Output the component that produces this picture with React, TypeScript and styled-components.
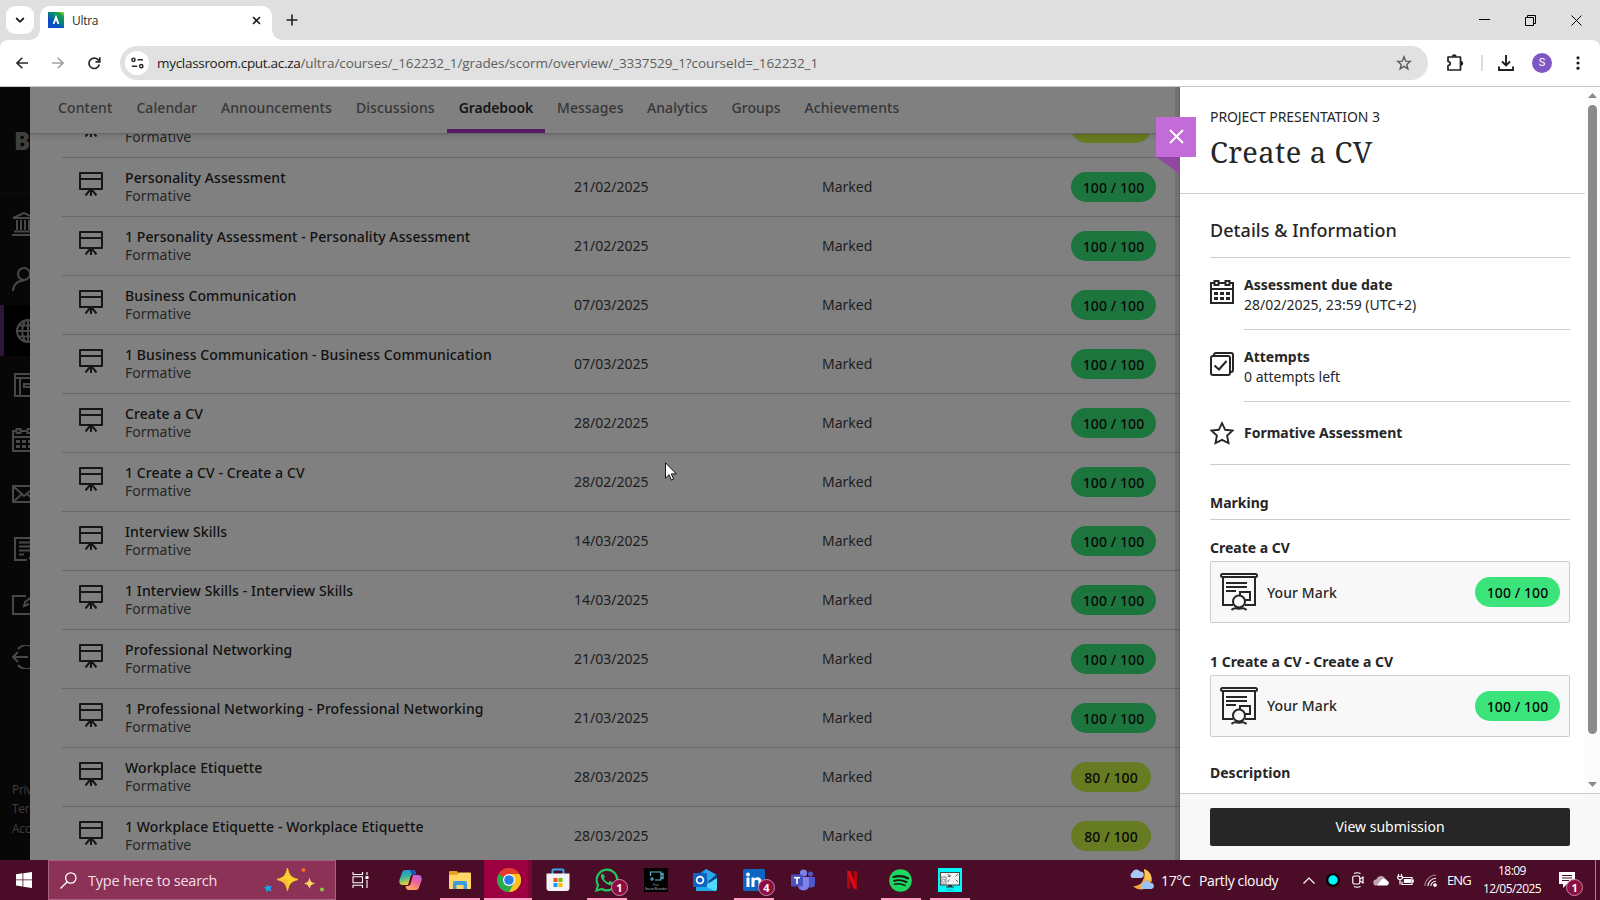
import React from "react";
import styled, { createGlobalStyle } from "styled-components";

const Global = createGlobalStyle`
  * { box-sizing: border-box; }
  body { margin: 0; width: 1600px; height: 900px; overflow: hidden; background: #808080;
    font-family: "Noto Sans", "Open Sans", sans-serif; color: #262626; }
  svg { display: block; flex: none; }
`;

const ui = `"Open Sans", "Noto Sans", sans-serif`;

const Screen = styled.div`
  width: 1600px; height: 900px; display: flex; flex-direction: column; overflow: hidden;
`;

/* ---------- browser chrome ---------- */
const TabStrip = styled.div`
  height: 40px; flex: none; background: #dfdfdf; display: flex; align-items: flex-start;
  padding: 6px 0 0 6px; font-family: ${ui};
`;
const TabSearch = styled.div`
  width: 28px; height: 28px; border-radius: 9px; background: #fff; display: grid; place-items: center; margin-right: 6px;
`;
const BrowserTab = styled.div`
  width: 232px; height: 34px; background: #fff; border-radius: 10px 10px 0 0; display: flex; align-items: center;
  padding: 0 11px 6px 8px; font-size: 12px; position: relative;
  &::before, &::after { content: ""; position: absolute; bottom: 0; width: 10px; height: 10px; }
  &::before { left: -10px; background: radial-gradient(circle at 0 0, transparent 9.5px, #fff 10px); }
  &::after { right: -10px; background: radial-gradient(circle at 100% 0, transparent 9.5px, #fff 10px); }
`;
const TabTitle = styled.span`
  flex: 1; margin-left: 8px; letter-spacing: -0.3px; color: #2b2b2b;
`;
const NewTab = styled.div` margin: 8px 0 0 14px; `;
const WindowButtons = styled.div`
  margin-left: auto; display: flex; gap: 35px; padding: 9px 18px 0 0;
`;
const Toolbar = styled.div`
  height: 47px; flex: none; background: #fff; border-bottom: 1px solid #c8c8c8; display: flex; align-items: center;
  padding: 0 16px 0 16px; border-radius: 8px 8px 0 0; font-family: ${ui};
`;
const ToolbarShell = styled.div` background: #dfdfdf; flex: none; `;
const NavButtons = styled.div` display: flex; gap: 24px; width: 104px; flex: none; `;
const Omnibox = styled.div`
  width: 1308px; height: 34px; border-radius: 17px; background: #e1e1e1; display: flex; align-items: center; padding: 0 16px 0 5px;
`;
const SiteInfo = styled.div`
  width: 24px; height: 24px; border-radius: 50%; background: #fff; display: grid; place-items: center; margin-right: 8px;
`;
const Url = styled.span`
  flex: 1; font-size: 13.5px; color: #5c5e60; letter-spacing: -0.085px; white-space: nowrap; margin-top: -1px;
  b { font-weight: 400; color: #1c1c1e; letter-spacing: -0.3px; }
`;
const Divider = styled.div` width: 2px; height: 16px; background: #dcdcdc; margin: 0 15px 0 17px; `;
const Avatar = styled.div`
  width: 20px; height: 20px; border-radius: 50%; background: #7e57c2; color: #fff; font: 11px/20px Roboto, sans-serif;
  text-align: center; margin: 0 24px 0 18px;
`;

/* ---------- page ---------- */
const Page = styled.div` height: 773px; flex: none; display: flex; position: relative; overflow: hidden; `;
const Rail = styled.div`
  width: 30px; flex: none; background: #070707; overflow: hidden; display: flex; flex-direction: column;
`;
const Brand = styled.div`
  height: 107px; border-bottom: 1px solid #0e0e0e; padding: 37px 0 0 14px; font: 800 24px/34px "Open Sans", sans-serif; color: #3f3f3f;
`;
const RailItem = styled.div<{ $h: number; $pad?: number; $active?: boolean }>`
  height: ${p => p.$h}px; flex: none; display: flex; align-items: center;
  padding-left: ${p => p.$pad ?? 12}px;
  background: ${p => (p.$active ? "linear-gradient(90deg, #2e1636 4px, #000 4px)" : "none")};
`;
const RailLinks = styled.div`
  margin-top: auto; padding: 0 0 22px 12px; font: 12px/19.5px ${ui}; letter-spacing: -0.3px; color: #3f3f3f; white-space: nowrap;
`;
const Main = styled.div` width: 1150px; flex: none; display: flex; flex-direction: column; background: #808080; `;
const CourseNav = styled.nav`
  height: 47px; flex: none; border-bottom: 1px solid #686868; display: flex; padding-left: 28px; position: relative;
  box-shadow: 0 1px 6px rgba(0,0,0,.18);
`;
const NavItem = styled.div<{ $w: number; $active?: boolean }>`
  width: ${p => p.$w}px; flex: none; margin-right: ${p => (p.$active ? 12 : 24)}px; margin-left: ${p => (p.$active ? -12 : 0)}px;
  height: 46px; line-height: 42px; font-size: 14px; letter-spacing: ${p => (p.$active ? -0.1 : 0.07)}px;
  font-weight: ${p => (p.$active ? 600 : 500)}; text-align: center; white-space: nowrap;
  color: ${p => (p.$active ? "#161616" : "#363636")};
  border-bottom: ${p => (p.$active ? "4px solid #571961" : "none")};
`;
const Rows = styled.div` flex: 1; overflow: hidden; padding-left: 32px; display: flex; flex-direction: column; `;
const Row = styled.div`
  height: 59px; flex: none; border-bottom: 1px solid #686868; display: flex; align-items: center; color: #1d1d1d; font-size: 14px;
`;
const PartialRow = styled(Row)` margin-top: -35px; `;
const RowIcon = styled.div` width: 63px; padding-left: 17px; margin-top: -7px; `;
const RowText = styled.div` width: 449px; line-height: 18px; margin-top: -1px; white-space: nowrap; `;
const RowTitle = styled.div` font-weight: 500; letter-spacing: 0.1px; color: #111; `;
const RowSub = styled.div` color: #262626; `;
const DateCell = styled.div` width: 248px; margin-top: -2px; `;
const StatusCell = styled.div` width: 249px; margin-top: -2px; `;
const Pill = styled.div<{ $bg: string; $w: number }>`
  width: ${p => p.$w}px; height: 30px; line-height: 31px; border-radius: 15px; background: ${p => p.$bg}; color: #080808;
  text-align: center; font-size: 14px; font-weight: 500; letter-spacing: 0.1px; flex: none; white-space: nowrap;
`;

/* ---------- side panel ---------- */
const Panel = styled.aside`
  width: 420px; flex: none; background: #fff; display: flex; flex-direction: column; position: relative;
  box-shadow: 0 0 0 1px rgba(0,0,0,.14), 0 0 0 5px rgba(0,0,0,.11);
`;
const CloseFlag = styled.div`
  position: absolute; left: -24px; top: 30px; width: 40px; height: 40px; background: #c36bd6; display: grid; place-items: center; z-index: 2;
  padding-bottom: 1px;
  &::after { content: ""; position: absolute; left: 0; top: 40px; width: 24px; height: 17px; background: #8f489e; clip-path: polygon(0 0, 100% 0, 100% 100%); }
`;
const PanelScroll = styled.div` height: 706px; display: flex; `;
const PanelContent = styled.div` width: 405px; display: flex; flex-direction: column; overflow: hidden; `;
const ScrollTrack = styled.div`
  width: 15px; background: #fcfcfc; display: flex; flex-direction: column; align-items: center; padding: 6px 0 6px 0;
`;
const ScrollThumb = styled.div` width: 9px; height: 629px; border-radius: 5px; background: #8b8b8b; margin-top: 7px; `;
const PanelHeader = styled.header` height: 107px; flex: none; border-bottom: 1px solid #cdcdcd; padding: 20px 0 0 30px; white-space: nowrap; `;
const Eyebrow = styled.div` font-size: 14px; line-height: 20px; letter-spacing: -0.08px; color: #262626; `;
const Title = styled.h1`
  margin: 6px 0 0; font: 400 29px/38px "Noto Serif", "DejaVu Serif Condensed", "DejaVu Serif", serif; letter-spacing: 0.45px; color: #262626;
`;
const Body = styled.div` padding: 0 15px 0 30px; display: flex; flex-direction: column; `;
const SectionTitle = styled.h2`
  margin: 0; height: 64px; border-bottom: 1px solid #cdcdcd; font-size: 18px; font-weight: 500; line-height: 72px; letter-spacing: 0.05px;
`;
const InfoItem = styled.div<{ $h: number; $last?: boolean }>`
  height: ${p => p.$h}px; display: flex; gap: 10px; padding-top: ${p => (p.$last ? 19 : 22)}px;
  border-bottom: ${p => (p.$last ? "1px solid #cdcdcd" : "none")};
`;
const InfoText = styled.div<{ $last?: boolean }>`
  flex: 1; font-size: 14px; line-height: 20px; margin-top: ${p => (p.$last ? 2 : -5)}px;
  border-bottom: ${p => (p.$last ? "none" : "1px solid #cdcdcd")};
  b { display: block; }
`;
const MarkingTitle = styled.h3`
  margin: 0; height: 55px; border-bottom: 1px solid #cdcdcd; font-size: 14px; line-height: 20px; padding-top: 28px;
`;
const MarkLabel = styled.div<{ $h: number }>`
  height: ${p => p.$h}px; font-size: 14px; font-weight: 700; line-height: 20px; display: flex; align-items: flex-end; padding-bottom: 3px;
`;
const MarkCard = styled.div`
  height: 62px; border: 1px solid #cdcdcd; border-radius: 2px; background: #f8f8f8; display: flex; align-items: center; padding: 0 9px; font-size: 14px; font-weight: 500;
`;
const MarkText = styled.span<{ $lift?: boolean }>`
  flex: 1; margin-left: 9px; letter-spacing: 0.1px; padding-bottom: ${p => (p.$lift ? 2 : 0)}px;
`;
const PanelFooter = styled.footer`
  height: 67px; border-top: 1px solid #cdcdcd; background: #f8f8f8; padding: 14px 30px 0;
`;
const SubmitButton = styled.div`
  height: 38px; border-radius: 2px; background: #262626; color: #fff; text-align: center; font-size: 14px; line-height: 37px;
`;

/* ---------- taskbar ---------- */
const Taskbar = styled.div`
  height: 40px; flex: none; background: #4a0c27; display: flex; font-family: ${ui}; color: #fff; overflow: hidden;
`;
const StartButton = styled.div` width: 48px; display: grid; place-items: center; `;
const SearchBox = styled.div`
  width: 288px; border: 1px solid #a8617f; background: #8b3256; display: flex; align-items: center; padding: 0 8px 0 11px;
  font-size: 14.5px; color: #f3dfe7; letter-spacing: -0.22px; white-space: nowrap; margin-right: 1px;
  span { margin-left: 11px; flex: 1; }
`;
const TaskSlot = styled.div<{ $on?: boolean; $active?: boolean }>`
  width: 49px; flex: none; display: grid; place-items: center; position: relative;
  background: ${p => (p.$active ? "linear-gradient(90deg, #9c0040 0 44px, #7c0638 44px 48px, transparent 48px)" : "none")};
  &::after { content: ""; display: ${p => (p.$on || p.$active ? "block" : "none")}; position: absolute; bottom: 0;
    left: ${p => (p.$active ? 0 : 5)}px; width: ${p => (p.$active ? 48 : 40)}px; height: 2px; background: #ff9fc4; }
`;
const Badge = styled.div`
  position: absolute; left: 29px; top: 19px; width: 17px; height: 17px; border-radius: 50%; background: #8d0c42; border: 1px solid #c98ba5;
  font: 700 11px/15px "Open Sans", sans-serif; text-align: center; color: #fff;
`;
const Tray = styled.div` margin-left: auto; display: flex; align-items: center; width: 471px; flex: none; font-size: 14px; white-space: nowrap; `;
const TrayCell = styled.div<{ $w: number; $ml?: number }>`
  width: ${p => p.$w}px; margin-left: ${p => p.$ml ?? 0}px; flex: none; letter-spacing: -0.36px; position: relative;
`;
const LanguageCell = styled(TrayCell)` font-size: 13px; letter-spacing: -0.9px; `;
const NoticeBadge = styled(Badge)` left: 7px; top: 7px; `;
const Clock = styled.div`
  width: 76px; text-align: center; font-size: 12px; line-height: 18px; letter-spacing: -0.55px; flex: none;
`;
const ShowDesktop = styled.div` width: 1px; height: 40px; background: #a08490; margin-left: auto; margin-right: 4px; `;
const Cursor = styled.div` position: absolute; left: 665px; top: 375px; z-index: 3; `;

const Board = () => (
  <svg width="24" height="24" viewBox="0 0 24 24" fill="none" stroke="#161616" strokeWidth="2">
    <path d="M1 1h22v16H1zM1 7h22M12 17v7M11 18l-4.500 5.500M13 18l4.500 5.500" strokeLinejoin="round" />
  </svg>
);
const Calendar = ({ c = "#262626" }: { c?: string }) => (
  <svg width="24" height="24" viewBox="0 0 24 24" fill="none" stroke={c} strokeWidth="2">
    <path d="M4 3H1v20h22V3h-3M9.500 3h5M1 9h22M4.500 1h4v4h-4zM15.500 1h4v4h-4z" />
    <path d="M4 13.500h4M10 13.500h4M16 13.500h4M4 18.500h4M10 18.500h4M16 18.500h4" strokeWidth="3" />
  </svg>
);
const Certificate = () => (
  <svg width="38" height="38" viewBox="0 0 38 38" fill="none" stroke="#262626" strokeWidth="2">
    <rect x="1" y="1" width="36" height="3" rx="1.500" />
    <path d="M3 4v28h10M25 32h10V4M6 10h21M6 14h21M6 18h10M20 22v-3h10v8h-5" />
    <circle cx="19" cy="28.500" r="6" />
    <path d="M11.500 37c2-2.200 4.500-2.200 7.500-1.200 3-1 5.500-1 7.500 1.200" />
  </svg>
);

type Course = [string, string, number];
const courses: Course[] = [
  ["Personality Assessment", "21/02/2025", 100],
  ["1 Personality Assessment - Personality Assessment", "21/02/2025", 100],
  ["Business Communication", "07/03/2025", 100],
  ["1 Business Communication - Business Communication", "07/03/2025", 100],
  ["Create a CV", "28/02/2025", 100],
  ["1 Create a CV - Create a CV", "28/02/2025", 100],
  ["Interview Skills", "14/03/2025", 100],
  ["1 Interview Skills - Interview Skills", "14/03/2025", 100],
  ["Professional Networking", "21/03/2025", 100],
  ["1 Professional Networking - Professional Networking", "21/03/2025", 100],
  ["Workplace Etiquette", "28/03/2025", 80],
  ["1 Workplace Etiquette - Workplace Etiquette", "28/03/2025", 80],
];

const navTabs: [string, number][] = [
  ["Content", 54.4], ["Calendar", 60.6], ["Announcements", 110.7], ["Discussions", 79.3], ["Gradebook", 98],
  ["Messages", 66], ["Analytics", 60.5], ["Groups", 49], ["Achievements", 95],
];

const RailIcon = ({ d }: { d: string }) => (
  <svg width="24" height="24" viewBox="0 0 24 24" fill="none" stroke="#484848" strokeWidth="2"><path d={d} /></svg>
);

const Copilot = () => (
  <svg width="23" height="22" viewBox="0 0 23 22">
    <defs>
      <linearGradient id="cpa" x1="0" y1="0" x2="0.3" y2="1"><stop offset="0" stopColor="#1a8ff0" /><stop offset=".5" stopColor="#35b39a" /><stop offset="1" stopColor="#f2cc35" /></linearGradient>
      <linearGradient id="cpb" x1="1" y1="0" x2="0.5" y2="1"><stop offset="0" stopColor="#a968f0" /><stop offset=".5" stopColor="#f0609f" /><stop offset="1" stopColor="#fda060" /></linearGradient>
    </defs>
    <path d="M6 1h8c2 0 2.500 2 3 4h-2c-2 0-3 1-3.500 3L9 16H3.500C.5 16-.2 13 .6 10.500L3 3.500C3.500 2 4.500 1 6 1z" fill="url(#cpa)" />
    <path d="M13 1c2.500 0 3 2 3.700 4.500h-4L11 1z" fill="#1b50c0" />
    <path d="M17 21H9.500C7.500 21 7 19 6.500 17h1.800c2 0 3-1 3.500-3L14 6h5.500c3 0 3.700 3 3 5.500L20 18.500c-.5 1.500-1.500 2.500-3 2.500z" fill="url(#cpb)" />
  </svg>
);
const Explorer = () => (
  <svg width="22" height="18" viewBox="0 0 22 18">
    <path d="M0 1q0-1 1-1h7l2 2.500h11q1 0 1 1V17q0 1-1 1H1q-1 0-1-1z" fill="#e5a422" />
    <path d="M0 4h8l2-2.500h11q1 0 1 1V17q0 1-1 1H1q-1 0-1-1z" fill="#ffd767" />
    <path d="M4 18v-6q0-2 2-2h10q2 0 2 2v6h-3.500v-4h-7v4z" fill="#3d9bdc" />
  </svg>
);
const Chrome = () => (
  <svg width="24" height="24" viewBox="0 0 24 24">
    <path d="M12 12 1.600 6A12 12 0 0 1 22.400 6z" fill="#e33b2e" />
    <path d="M12 12 22.400 6A12 12 0 0 1 12 24z" fill="#fcc31e" />
    <path d="M12 12v12A12 12 0 0 1 1.600 6z" fill="#2da94f" />
    <path d="M12 6h10.400L17.200 15z" fill="#fcc31e" /><path d="M17.200 15 12 24 6.800 15z" fill="#2da94f" /><path d="M6.800 15 1.600 6 12 6z" fill="#2da94f" /><path d="M1.600 6A12 12 0 0 1 22.400 6H12L6.800 9z" fill="#e33b2e" />
    <circle cx="12" cy="12" r="6" fill="#fff" /><circle cx="12" cy="12" r="4.800" fill="#2a7de9" />
  </svg>
);
const Store = () => (
  <svg width="24" height="24" viewBox="0 0 24 24">
    <path d="M6.500 6V2.500q0-1 1-1h9q1 0 1 1V6" fill="none" stroke="#35a8ec" strokeWidth="2" />
    <path d="M.5 5.500h23V20q0 3-3 3h-17q-3 0-3-3z" fill="#f3f3f5" />
    <path d="M7.500 10H11.500v4H7.500z" fill="#f25022" /><path d="M12.500 10h4v4h-4z" fill="#7fba00" /><path d="M7.500 15h4v4h-4z" fill="#00a4ef" /><path d="M12.500 15h4v4h-4z" fill="#ffb900" />
  </svg>
);
const WhatsApp = () => (
  <svg width="24" height="24" viewBox="0 0 24 24">
    <path d="M1.500 22.500 3 17A10.300 10.300 0 1 1 7 21z" fill="none" stroke="#25c45f" strokeWidth="2.200" />
    <path d="M8.500 6.300c-.5-1-1.500-.6-2 0-1.600 2 .2 5 2.300 7.200s5.300 4.500 7.700 3.300c1.500-.8 1.600-2.400 1-2.700l-2.500-1.200c-.6-.2-1.200 1.400-1.700 1.500-1.300 0-4.300-3-4.400-4 0-.5 1.200-1.200 1-1.700z" fill="#25c45f" />
  </svg>
);
const RecorderApp = () => (
  <svg width="24" height="24" viewBox="0 0 24 24">
    <path d="M0 0h24v24H0z" fill="#000" />
    <g fill="none" stroke="#57b9d4" strokeWidth="1.200"><path d="M6.500 8V4h10.500v8h-6M17 6.500l2-1v5l-2-1M6 11h4M8 9v4" /></g>
    <text x="12" y="18" fontSize="3" fill="#bbb" textAnchor="middle" fontFamily="Open Sans">Free</text>
    <text x="12" y="21.800" fontSize="2.900" fill="#ddd" textAnchor="middle" fontFamily="Open Sans">Screen Recorder</text>
  </svg>
);
const Outlook = () => (
  <svg width="24" height="22" viewBox="0 0 24 22">
    <path d="M4 6 13 0l11 7v8H4z" fill="#1490df" /><path d="M13 0l11 6-8 6-6-6z" fill="#28a8ea" /><path d="M16 12 24 5v6l-9 5z" fill="#0a3f86" />
    <path d="M3 22l21-13v11q0 2-2 2z" fill="#50d9ff" /><path d="M3 13l19 9H4q-1 0-1-1z" fill="#1fa9ec" />
    <rect y="4" width="14" height="14" rx="1" fill="#0f62be" /><circle cx="7" cy="11" r="3.400" fill="none" stroke="#fff" strokeWidth="1.700" />
  </svg>
);
const LinkedIn = () => (
  <svg width="22" height="22" viewBox="0 0 22 22">
    <rect width="22" height="22" rx="1.500" fill="#0a66c2" />
    <circle cx="5" cy="5.500" r="1.900" fill="#fff" /><path d="M3.500 8.500h3V18h-3zM8.500 8.500h3v1.300c2-2.500 7-2 7 2.500V18h-3v-5c0-3-4-3-4 0v5h-3z" fill="#fff" />
  </svg>
);
const Teams = () => (
  <svg width="24" height="22" viewBox="0 0 24 22">
    <circle cx="19.500" cy="5" r="2.500" fill="#5059c9" /><circle cx="12.500" cy="4" r="3.600" fill="#7b83eb" />
    <path d="M16 8h8v7q0 3.500-4 3.500h-4z" fill="#5059c9" /><path d="M7 8h11v8q0 5-5.500 5.500Q7 21 7 16z" fill="#7b83eb" />
    <rect y="5.500" width="12" height="12" rx="1" fill="#4b53bc" /><path d="M3 8.800h6M6 8.800v6.200" stroke="#fff" strokeWidth="1.600" />
  </svg>
);
const Netflix = () => (
  <svg width="10" height="18" viewBox="0 0 10 18">
    <path d="M0 0h3.300v17.600L0 18zM6.700 0H10v18l-3.300-.4z" fill="#b1060f" /><path d="M0 0h3.300L10 18l-3.400-.4z" fill="#e50914" />
  </svg>
);
const Spotify = () => (
  <svg width="23" height="23" viewBox="0 0 23 23">
    <circle cx="11.500" cy="11.500" r="11.300" fill="#1ed760" />
    <g fill="none" stroke="#171717" strokeLinecap="round"><path d="M4.500 8c5-1.400 10-1 14.500 1.300" strokeWidth="2.200" /><path d="M5 11.800c4.500-1.200 8.500-.8 12.500 1.300" strokeWidth="1.900" /><path d="M5.500 15.300c4-.9 7-.6 10.500 1.200" strokeWidth="1.500" /></g>
  </svg>
);
const ScreenApp = () => (
  <svg width="24" height="24" viewBox="0 0 24 24">
    <path d="M0 0h24v24H0z" fill="#00f8fc" />
    <rect x="2.500" y="4.500" width="19" height="12.500" fill="#f4f4f4" stroke="#444" />
    <rect x="3" y="9" width="5" height="7" fill="#eee" stroke="#777" strokeWidth=".8" /><circle cx="5.500" cy="12.500" r="1.500" fill="none" stroke="#777" strokeWidth=".7" />
    <path d="M9.500 6l2.500 2.500M12 6.500v2H10M20 6l-2.500 2.500M9.500 14l2-2.500M20 14l-2.500-2.500" stroke="#555" strokeWidth=".9" fill="none" />
    <path d="M10 17h4v1.500h2v1H8v-1h2z" fill="#333" /><path d="M8.500 22h7" stroke="#278" strokeWidth=".9" strokeDasharray="1 .6" />
  </svg>
);
const Weather = () => (
  <svg width="25" height="24" viewBox="0 0 25 24">
    <path d="M15 1a10.500 10.500 0 1 1-11 17C12 19 17 11 15 1z" fill="#f4a73a" />
    <path d="M15 1c6 2 8.500 7 7.500 13C20 10 17 12 16 13c1-4 0-8-1-12z" fill="#fcc65b" />
    <path d="M3 10a3.200 3.200 0 0 1 .3-5.500A4.200 4.200 0 0 1 11 3.500a3.200 3.200 0 0 1 1 6.500z" fill="#a6c8f7" />
    <path d="M13 21a3.200 3.200 0 0 1 .5-5.500 4.200 4.200 0 0 1 7.500-.6 3 3 0 0 1 1.500 6.100z" fill="#9cc2f8" />
  </svg>
);
const Sparkles = () => (
  <svg width="64" height="38" viewBox="0 1 64 38">
    <path d="M24.500 8c1.500 7 3 9.500 10.500 11.500-7.500 2-9 4.500-10.500 11-1.500-6.500-3-9-10.500-11C21.500 17.500 23 15 24.500 8z" fill="#ffcf2b" stroke="#ffcf2b" strokeLinejoin="round" />
    <path d="M24.500 31c-1.500-7-3-9.500-10.500-11.500h10.500z" fill="#f6b13c" opacity=".6" />
    <path d="M46.500 17.500c.9 4 2 5 5.500 6-3.500 1-4.600 2-5.500 5.500-.9-3.500-2-4.500-5.500-5.500 3.500-1 4.600-2 5.500-6z" fill="#ffd45c" />
    <path d="M4 24l2 2.300 3-.3-1.500 2.500 1 3-3-1L3 32v-3l-2.500-1.500 3-.7z" fill="#1ba1e8" />
    <circle cx="40.500" cy="10" r="2" fill="#f26522" /><circle cx="59" cy="29.500" r="2.100" fill="#8cc63f" />
  </svg>
);

export default function App() {
  return (
    <Screen>
      <Global />
      <TabStrip>
        <TabSearch><svg width="10" height="10" viewBox="0 0 10 10" fill="none" stroke="#1f1f1f" strokeWidth="1.800"><path d="M1.200 3 5 6.800 8.800 3" /></svg></TabSearch>
        <BrowserTab>
          <svg width="16" height="16" viewBox="0 0 16 16">
            <defs><linearGradient id="fav" x1="1" y1="0" x2=".2" y2="1"><stop offset="0" stopColor="#c3e01a" /><stop offset=".22" stopColor="#12a052" /><stop offset=".5" stopColor="#087f80" /><stop offset=".72" stopColor="#0450c4" /></linearGradient></defs>
            <path d="M0 0h16v16H0z" fill="url(#fav)" /><path d="M5.500 12 8 5.500l2.500 6.500" fill="none" stroke="#fff" strokeWidth="1.900" />
          </svg>
          <TabTitle>Ultra</TabTitle>
          <svg width="9" height="9" viewBox="0 0 9 9" stroke="#1f1f1f" strokeWidth="1.600"><path d="M1 1l7 7M8 1 1 8" /></svg>
        </BrowserTab>
        <NewTab><svg width="12" height="12" viewBox="0 0 12 12" stroke="#1f1f1f" strokeWidth="1.600"><path d="M6 .5v11M.5 6h11" /></svg></NewTab>
        <WindowButtons>
          <svg width="11" height="11" viewBox="0 0 11 11" stroke="#000"><path d="M0 4.500h11" /></svg>
          <svg width="11" height="11" viewBox="0 0 11 11" fill="none" stroke="#000"><path d="M.5 2.500h8v8h-8zM2.500 2.500v-2h8v8h-2" /></svg>
          <svg width="11" height="11" viewBox="0 0 11 11" stroke="#000"><path d="M.5.5l10 10M10.500.5l-10 10" /></svg>
        </WindowButtons>
      </TabStrip>
      <ToolbarShell>
        <Toolbar>
          <NavButtons>
            <svg width="12" height="12" viewBox="0 0 12 12" fill="none" stroke="#2b2b2b" strokeWidth="1.600"><path d="M12 6H1M6.300.8 1 6l5.300 5.200" /></svg>
            <svg width="12" height="12" viewBox="0 0 12 12" fill="none" stroke="#a3a3a3" strokeWidth="1.600"><path d="M0 6h11M5.700.8 11 6l-5.300 5.200" /></svg>
            <svg width="13" height="13" viewBox="0 0 13 13" fill="none" stroke="#2b2b2b" strokeWidth="1.700"><path d="M11.300 7.500A5.200 5.200 0 1 1 10 2.700L11.500 4.300M11.800.3v4.500H7.500" /></svg>
          </NavButtons>
          <Omnibox>
            <SiteInfo><svg width="13" height="12" viewBox="0 0 13 12" fill="none" stroke="#2b2b2b" strokeWidth="1.500"><circle cx="2.500" cy="2.800" r="1.600" /><path d="M6.500 2.800H12M.8 9.200h5.500" /><circle cx="10.300" cy="9.200" r="1.600" /></svg></SiteInfo>
            <Url><b>myclassroom.cput.ac.za</b>/ultra/courses/_162232_1/grades/scorm/overview/_3337529_1?courseId=_162232_1</Url>
            <svg width="16" height="16" viewBox="0 0 16 16" fill="none" stroke="#5c5c5c" strokeWidth="1.400"><path d="M8 1.800l1.700 4.300 4.600.3-3.500 3 1.100 4.500L8 11.400l-3.900 2.500 1.100-4.500-3.500-3 4.600-.3z" /></svg>
          </Omnibox>
          <TrayCell $w={18} $ml={18}><svg width="18" height="18" viewBox="0 0 18 18" fill="none" stroke="#1f2022" strokeWidth="1.700"><path d="M2 3h12.500v13H2v-4.300c3-.4 3-3.800 0-4.200z" strokeLinejoin="round" /><path d="M6.500 2.500a1.800 1.800 0 0 1 3.500 0M15 7.500a1.800 1.800 0 0 1 0 3.500" fill="#1f2022" /></svg></TrayCell>
          <Divider />
          <svg width="16" height="16" viewBox="0 0 16 16" fill="none" stroke="#1f2022" strokeWidth="1.900"><path d="M8 0v10M4 6.500l4 4 4-4M1 11.500V15h14v-3.500" /></svg>
          <Avatar>S</Avatar>
          <svg width="4" height="14" viewBox="0 0 4 14" fill="#1f2022"><circle cx="2" cy="1.800" r="1.600" /><circle cx="2" cy="7" r="1.600" /><circle cx="2" cy="12.200" r="1.600" /></svg>
        </Toolbar>
      </ToolbarShell>

      <Page>
        <Rail>
          <Brand>B</Brand>
          <RailItem $h={59}><RailIcon d="M0 23h24M2 19.500h22M1 6l11-5 11 5zM5 8v10M9 8v10M13 8v10M17 8v10" /></RailItem>
          <RailItem $h={52}><RailIcon d="M12 13a6 6 0 1 0 0-12 6 6 0 0 0 0 12zM1 24c0-6 4.500-10.500 11-10.500" /></RailItem>
          <RailItem $h={51} $pad={16} $active><RailIcon d="M12 1a11 11 0 1 0 0 22 11 11 0 0 0 0-22zM12 1v22M1 12h22M3 6.500h18M3 17.500h18M10 1C5 7 5 17 10 23M14 1c5 6 5 16 0 22" /></RailItem>
          <RailItem $h={58} $pad={14}><RailIcon d="M1 1h22v22H1zM1 5h22M6 5v18M10 11h10v3h-10z" /></RailItem>
          <RailItem $h={52}><Calendar c="#484848" /></RailItem>
          <RailItem $h={55}><RailIcon d="M1 4h23v16H1zM1 4l9 8-9 8M1 4l11 10L24 4M24 20l-9-8" /></RailItem>
          <RailItem $h={56} $pad={14}><RailIcon d="M23 1H1v22h12M5 5.500h16M5 9.500h16M5 13.500h11M5 17.500h5M15 22l3-3" /></RailItem>
          <RailItem $h={54}><RailIcon d="M14 4H1v18h22M22 3 13 10l-1 4 5-2" /></RailItem>
          <RailItem $h={51}><RailIcon d="M16 12H1M6 7l-5 5 5 5M6 4a11 11 0 0 1 16-1M6 20a11 11 0 0 0 16 1" /></RailItem>
          <RailLinks>Priv<br />Ter<br />Acc</RailLinks>
        </Rail>
        <Main>
          <CourseNav>
            {navTabs.map(([t, w]) => <NavItem key={t} $w={w} $active={t === "Gradebook"}>{t}</NavItem>)}
          </CourseNav>
          <Rows>
            <PartialRow>
              <RowIcon><Board /></RowIcon>
              <RowText><RowTitle>&nbsp;</RowTitle><RowSub>Formative</RowSub></RowText>
              <DateCell /><StatusCell /><Pill $bg="#677b22" $w={80} />
            </PartialRow>
            {courses.map(([name, date, score]) => (
              <Row key={name}>
                <RowIcon><Board /></RowIcon>
                <RowText><RowTitle>{name}</RowTitle><RowSub>Formative</RowSub></RowText>
                <DateCell>{date}</DateCell>
                <StatusCell>Marked</StatusCell>
                <Pill $bg={score === 100 ? "#1d753e" : "#677b22"} $w={score === 100 ? 85 : 80}>{score} / 100</Pill>
              </Row>
            ))}
          </Rows>
        </Main>
        <Panel>
          <CloseFlag><svg width="15" height="15" viewBox="0 0 15 15" stroke="#fff" strokeWidth="2"><path d="M1 1l13 13M14 1 1 14" /></svg></CloseFlag>
          <PanelScroll>
            <PanelContent>
              <PanelHeader>
                <Eyebrow>PROJECT PRESENTATION 3</Eyebrow>
                <Title>Create a CV</Title>
              </PanelHeader>
              <Body>
                <SectionTitle>Details &amp; Information</SectionTitle>
                <InfoItem $h={72}><Calendar /><InfoText><b>Assessment due date</b>28/02/2025, 23:59 (UTC+2)</InfoText></InfoItem>
                <InfoItem $h={72}>
                  <svg width="24" height="24" viewBox="0 0 24 24" fill="none" stroke="#262626" strokeWidth="2"><rect x="1" y="4" width="19" height="19" rx="2" /><path d="M4 3q0-2 2-2h15q2 0 2 2v15q0 2-2 2M4.500 13.500l4.500 4 7.500-8.500" /></svg>
                  <InfoText><b>Attempts</b>0 attempts left</InfoText>
                </InfoItem>
                <InfoItem $h={63} $last>
                  <svg width="24" height="24" viewBox="0 0 24 24" fill="none" stroke="#262626" strokeWidth="1.900"><path d="M12 2.200l3.200 6.600 7.200.8-5.300 5 1.400 7.400L12 18.800 5.500 22l1.400-7.400-5.300-5 7.200-.8z" /></svg>
                  <InfoText $last><b>Formative Assessment</b></InfoText>
                </InfoItem>
                <MarkingTitle>Marking</MarkingTitle>
                <MarkLabel $h={41}>Create a CV</MarkLabel>
                <MarkCard><Certificate /><MarkText>Your Mark</MarkText><Pill $bg="#3ae47a" $w={85}>100 / 100</Pill></MarkCard>
                <MarkLabel $h={52}>1 Create a CV - Create a CV</MarkLabel>
                <MarkCard><Certificate /><MarkText $lift>Your Mark</MarkText><Pill $bg="#3ae47a" $w={85}>100 / 100</Pill></MarkCard>
                <MarkLabel $h={49}>Description</MarkLabel>
              </Body>
            </PanelContent>
            <ScrollTrack>
              <svg width="9" height="5" viewBox="0 0 9 5"><path d="M0 5 4.500 0 9 5z" fill="#8b8b8b" /></svg>
              <ScrollThumb />
              <svg width="9" height="53" viewBox="0 0 9 53"><path d="M0 48l4.500 5L9 48z" fill="#8b8b8b" /></svg>
            </ScrollTrack>
          </PanelScroll>
          <PanelFooter><SubmitButton>View submission</SubmitButton></PanelFooter>
        </Panel>
        <Cursor><svg width="12" height="19" viewBox="0 0 12 19"><path d="M.5.8v15.400l3.600-3.500 2.300 5.400 2.200-1-2.300-5.200h5z" fill="#fff" stroke="#000" strokeWidth=".9" /></svg></Cursor>
      </Page>

      <Taskbar>
        <StartButton><svg width="16" height="16" viewBox="0 0 16 16" fill="#fff"><path d="M0 2.200 6.500 1.300v6.200H0zM7.300 1.200 16 0v7.500H7.300zM0 8.300h6.500v6.200L0 13.600zM7.300 8.300H16V16l-8.700-1.200z" /></svg></StartButton>
        <SearchBox>
          <svg width="17" height="17" viewBox="0 0 17 17" fill="none" stroke="#fff" strokeWidth="1.300"><circle cx="10.800" cy="6" r="5.200" /><path d="M7.200 9.700.5 16.500" /></svg>
          <span>Type here to search</span>
          <Sparkles />
        </SearchBox>
        <TaskSlot><svg width="19" height="16" viewBox="0 0 19 16" fill="none" stroke="#fff" strokeWidth="1.100"><path d="M1 0v2.500h9.500V0M1 4.800h9.500v6H1zM1 16v-2.700h9.500V16M15 0v3M15 8v8" /><path d="M13.500 4h3v3h-3z" fill="#fff" stroke="none" /></svg></TaskSlot>
        <TaskSlot><Copilot /></TaskSlot>
        <TaskSlot $on><Explorer /></TaskSlot>
        <TaskSlot $active><Chrome /></TaskSlot>
        <TaskSlot><Store /></TaskSlot>
        <TaskSlot $on><WhatsApp /><Badge>1</Badge></TaskSlot>
        <TaskSlot><RecorderApp /></TaskSlot>
        <TaskSlot><Outlook /></TaskSlot>
        <TaskSlot $on><LinkedIn /><Badge>4</Badge></TaskSlot>
        <TaskSlot><Teams /></TaskSlot>
        <TaskSlot><Netflix /></TaskSlot>
        <TaskSlot $on><Spotify /></TaskSlot>
        <TaskSlot $on><ScreenApp /></TaskSlot>
        <Tray>
          <TrayCell $w={32}><Weather /></TrayCell>
          <TrayCell $w={38}>17°C</TrayCell>
          <TrayCell $w={104}>Partly cloudy</TrayCell>
          <TrayCell $w={23}><svg width="12" height="7" viewBox="0 0 12 7" fill="none" stroke="#fff" strokeWidth="1.200"><path d="M.5 6.500 6 1l5.500 5.500" /></svg></TrayCell>
          <TrayCell $w={26}><svg width="14" height="14" viewBox="0 0 14 14"><circle cx="7" cy="7" r="5.800" fill="#00f8fc" stroke="#000" strokeWidth="2.200" /></svg></TrayCell>
          <TrayCell $w={21}><svg width="12" height="16" viewBox="0 0 12 16" fill="none" stroke="#fff" strokeWidth="1.200"><rect x=".8" y="4" width="7" height="8" rx="1.500" /><path d="M8 7l3-2v6L8 9M2 1.500Q5 0 8.500 1.500M2 14.500q3 1.500 6.500 0" /></svg></TrayCell>
          <TrayCell $w={24}><svg width="17" height="11" viewBox="0 0 17 11"><path d="M3.500 10.500a3 3 0 0 1-.3-6A5 5 0 0 1 12 3l-7 7z" fill="#bfa5b0" /><path d="M4 10.500 8 5q4-3 6 .5a2.600 2.600 0 0 1 0 5z" fill="#fff" /></svg></TrayCell>
          <TrayCell $w={27}><svg width="17" height="12" viewBox="0 0 17 12" fill="none" stroke="#fff" strokeWidth="1.200"><path d="M6 3.500h9v7H5v-3M1.500 0v2M4.500 0v2M.8 2.500h4.500v2L3 6 .8 4.500zM3 6v4.500M16.200 5.500v3" /><path d="M7.500 5.500h6v3h-6z" fill="#fff" /></svg></TrayCell>
          <TrayCell $w={23}><svg width="13" height="13" viewBox="0 0 13 13" fill="none" stroke="#fff" strokeWidth="1.100"><path d="M.8 12A11.500 11.500 0 0 1 12 1" stroke="#a5798c" /><path d="M3.800 12A8.500 8.500 0 0 1 12 4.200M6.800 12A5.500 5.500 0 0 1 12 7.200" /><circle cx="11" cy="11" r="1.300" fill="#fff" /></svg></TrayCell>
          <LanguageCell $w={27}>ENG</LanguageCell>
          <Clock>18:09<br />12/05/2025</Clock>
          <TrayCell $w={18} $ml={9}>
            <svg width="16" height="16" viewBox="0 0 16 16"><path d="M0 0h16v12H8l-4 4v-4H0z" fill="#fff" /><path d="M3 3.500h10M3 6h10M3 8.500h7" stroke="#4a0c27" strokeWidth="1.100" /></svg>
            <NoticeBadge>1</NoticeBadge>
          </TrayCell>
          <ShowDesktop />
        </Tray>
      </Taskbar>
    </Screen>
  );
}
